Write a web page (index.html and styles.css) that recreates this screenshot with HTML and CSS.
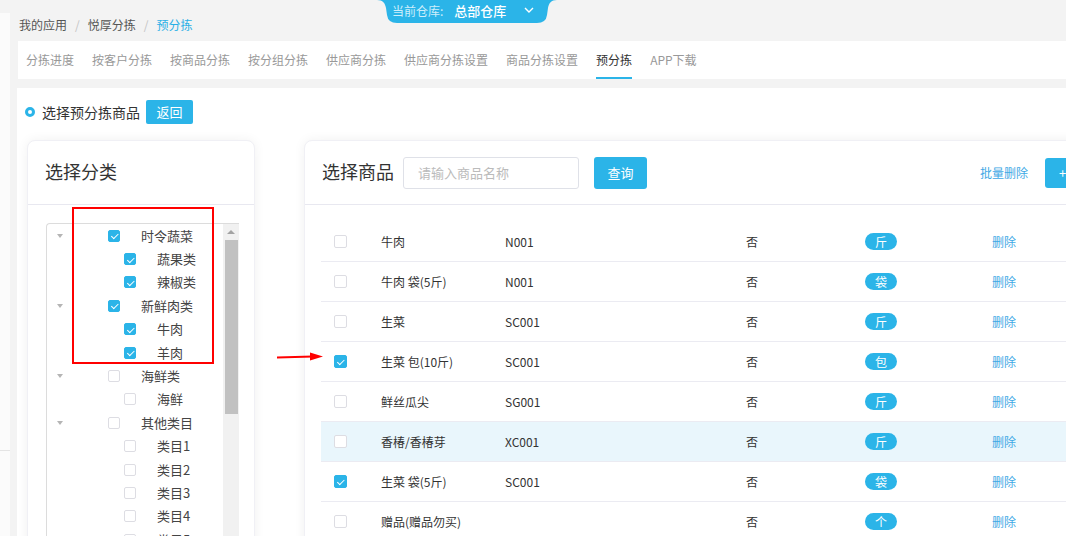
FILE: index.html
```html
<!DOCTYPE html>
<html lang="zh-CN">
<head>
<meta charset="utf-8">
<title>预分拣</title>
<link rel="stylesheet" href="styles.css">
</head>
<body>
<div class="page">
  <div class="side"><div class="side-line"></div></div>
  <div class="main">
    <nav class="crumbs"><span>我的应用</span><span class="sep">/</span><span>悦厚分拣</span><span class="sep">/</span><span class="cur">预分拣</span></nav>
    <div class="tabs">
      <span class="tab">分拣进度</span>
      <span class="tab">按客户分拣</span>
      <span class="tab">按商品分拣</span>
      <span class="tab">按分组分拣</span>
      <span class="tab">供应商分拣</span>
      <span class="tab">供应商分拣设置</span>
      <span class="tab">商品分拣设置</span>
      <span class="tab active">预分拣</span>
      <span class="tab">APP下载</span>
    </div>
    <section class="content">
      <div class="title-row">
        <span class="ring"></span>
        <span class="title-text">选择预分拣商品</span>
        <button class="btn btn-back">返回</button>
      </div>
      <div class="cards">
        <div class="card cat-card">
          <div class="card-head"><h2 class="card-title">选择分类</h2></div>
          <div class="tree-box">
            <ul class="tree">
              <li class="node"><span class="caret"></span><span class="cb on"></span><span class="label">时令蔬菜</span></li>
              <li class="node leaf"><span class="caret"></span><span class="cb on"></span><span class="label">蔬果类</span></li>
              <li class="node leaf"><span class="caret"></span><span class="cb on"></span><span class="label">辣椒类</span></li>
              <li class="node"><span class="caret"></span><span class="cb on"></span><span class="label">新鲜肉类</span></li>
              <li class="node leaf"><span class="caret"></span><span class="cb on"></span><span class="label">牛肉</span></li>
              <li class="node leaf"><span class="caret"></span><span class="cb on"></span><span class="label">羊肉</span></li>
              <li class="node"><span class="caret"></span><span class="cb"></span><span class="label">海鲜类</span></li>
              <li class="node leaf"><span class="caret"></span><span class="cb"></span><span class="label">海鲜</span></li>
              <li class="node"><span class="caret"></span><span class="cb"></span><span class="label">其他类目</span></li>
              <li class="node leaf"><span class="caret"></span><span class="cb"></span><span class="label">类目1</span></li>
              <li class="node leaf"><span class="caret"></span><span class="cb"></span><span class="label">类目2</span></li>
              <li class="node leaf"><span class="caret"></span><span class="cb"></span><span class="label">类目3</span></li>
              <li class="node leaf"><span class="caret"></span><span class="cb"></span><span class="label">类目4</span></li>
              <li class="node leaf"><span class="caret"></span><span class="cb"></span><span class="label">类目5</span></li>
            </ul>
            <div class="vscroll"><span class="up"></span><span class="thumb"></span></div>
          </div>
        </div>
        <div class="card goods-card">
          <div class="card-head goods-head">
            <h2 class="card-title">选择商品</h2>
            <input class="search" type="text" placeholder="请输入商品名称">
            <button class="btn btn-query">查询</button>
            <span class="bulk">批量删除</span>
            <button class="btn btn-add">+ 添加商品</button>
          </div>
          <div class="table">
            <div class="row"><span class="cb big"></span><span>牛肉</span><span>N001</span><span>否</span><span class="badge">斤</span><span class="del">删除</span></div>
            <div class="row"><span class="cb big"></span><span>牛肉 袋(5斤)</span><span>N001</span><span>否</span><span class="badge">袋</span><span class="del">删除</span></div>
            <div class="row"><span class="cb big"></span><span>生菜</span><span>SC001</span><span>否</span><span class="badge">斤</span><span class="del">删除</span></div>
            <div class="row"><span class="cb big on"></span><span>生菜 包(10斤)</span><span>SC001</span><span>否</span><span class="badge">包</span><span class="del">删除</span></div>
            <div class="row"><span class="cb big"></span><span>鲜丝瓜尖</span><span>SG001</span><span>否</span><span class="badge">斤</span><span class="del">删除</span></div>
            <div class="row hover"><span class="cb big"></span><span>香椿/香椿芽</span><span>XC001</span><span>否</span><span class="badge">斤</span><span class="del">删除</span></div>
            <div class="row"><span class="cb big on"></span><span>生菜 袋(5斤)</span><span>SC001</span><span>否</span><span class="badge">袋</span><span class="del">删除</span></div>
            <div class="row"><span class="cb big"></span><span>赠品(赠品勿买)</span><span></span><span>否</span><span class="badge">个</span><span class="del">删除</span></div>
          </div>
        </div>
      </div>
    </section>
  </div>

  <div class="wh-tab">
    <svg class="wh-shape" width="180" height="24" viewBox="0 0 180 24"><path d="M0 0 C6 0 8 3 9 8 L10 15 Q11 23 20 23 H160 Q169 23 170 15 L171 8 C172 3 174 0 180 0 Z" fill="#2bb4e8"/></svg>
    <div class="wh-text"><span class="wh-label">当前仓库:</span><span class="wh-name">总部仓库</span>
      <svg class="wh-chev" width="10" height="6" viewBox="0 0 10 6"><path d="M1 1 L5 5 L9 1" fill="none" stroke="#fff" stroke-width="1.4"/></svg>
    </div>
  </div>

  <div class="anno-box"></div>
  <svg class="anno-arrow" width="48" height="10" viewBox="0 0 48 10"><path d="M0 5.5 L36 4.6" stroke="#f00" stroke-width="2"/><path d="M33 0.5 L46 4.5 L33 8.5 Z" fill="#f00"/></svg>
</div>
</body>
</html>
```
FILE: styles.css
```css
* { box-sizing: border-box; }
html, body { margin: 0; padding: 0; }
body {
  width: 1066px;
  height: 536px;
  overflow: hidden;
  background: #f3f3f3;
  font-family: "Noto Sans CJK SC", "Noto Sans", sans-serif;
  color: #333;
  font-size: 12px;
}
ul { list-style: none; margin: 0; padding: 0; }
h2 { margin: 0; font-weight: normal; }
button { font-family: inherit; border: 0; padding: 0; cursor: pointer; }

.page { position: relative; display: flex; height: 536px; }

.side {
  width: 10px;
  margin-top: 13px;
  background: #fbfbfb;
  position: relative;
}
.side-line { position: absolute; left: 0; right: 0; top: 437px; border-top: 1px solid #e4e4e4; }

.main {
  margin-left: 7px;
  flex: 1;
  display: flex;
  flex-direction: column;
  min-width: 0;
}

.crumbs {
  height: 41px;
  padding: 17px 0 0 2px;
  line-height: 16px;
  font-size: 12px;
  color: #555;
}
.crumbs .sep { color: #c4c4c4; margin: 0 8px; }
.crumbs .cur { color: #2bb0e6; }

.tabs {
  margin-left: 1px;
  height: 38px;
  background: #fff;
  display: flex;
  gap: 18px;
  padding-left: 8px;
}
.tab {
  position: relative;
  line-height: 38px;
  font-size: 12px;
  color: #999;
  white-space: nowrap;
}
.tab.active { color: #333; }
.tab.active::after {
  content: "";
  position: absolute;
  left: 0; right: 0; bottom: 0;
  height: 2px;
  background: #2bb4e8;
}

.content {
  margin-top: 9px;
  flex: 1;
  background: #fff;
  padding: 12px 0 0 8px;
  overflow: hidden;
}
.title-row { display: flex; align-items: center; height: 24px; }
.ring {
  width: 10px; height: 10px;
  border-radius: 50%;
  border: 3px solid #2bb4e8;
  background: #fff;
}
.title-text { margin-left: 7px; font-size: 14px; color: #333; line-height: 20px; }
.btn { background: #2bb4e8; color: #fff; border-radius: 2px; }
.btn-back { margin-left: 6px; width: 47px; height: 24px; font-size: 13px; line-height: 24px; }

.cards { display: flex; gap: 49px; margin: 16px 0 0 2px; }
.card {
  background: #fff;
  border: 1px solid #f0f0f5;
  border-radius: 8px;
  box-shadow: 0 0 12px rgba(0, 0, 0, 0.06);
  height: 460px;
  flex-shrink: 0;
}
.card-head {
  height: 64px;
  border-bottom: 1px solid #e8e8f0;
  display: flex;
  align-items: center;
  padding-left: 17px;
}
.card-title { font-size: 18px; line-height: 24px; color: #333; margin-top: -3px; }

.cat-card { width: 228px; }
.tree-box {
  margin: 18px 0 0 18px;
  width: 193px;
  height: 330px;
  display: flex;
  border-top: 1px solid #dcdcdc;
  border-left: 1px solid #dcdcdc;
  border-radius: 4px 0 0 0;
}
.tree { flex: 1; padding-top: 0; }
.node {
  display: flex;
  align-items: center;
  height: 23.4px;
  padding-left: 10px;
  font-size: 13px;
  color: #444;
}
.caret {
  width: 0; height: 0;
  border-left: 3.5px solid transparent;
  border-right: 3.5px solid transparent;
  border-top: 4px solid #b5b5b5;
  margin-right: 45px;
}
.leaf .caret { visibility: hidden; margin-right: 61px; }
.cb {
  position: relative;
  width: 12px; height: 12px;
  border: 1px solid #dddde3;
  border-radius: 2px;
  background: #fff;
  flex-shrink: 0;
}
.cb.on { background: #2bb4e8; border-color: #2bb4e8; }
.cb.on::after {
  content: "";
  position: absolute;
  left: 3.5px; top: 1.5px;
  width: 3px; height: 5.5px;
  border: solid #fff;
  border-width: 0 1.3px 1.3px 0;
  transform: rotate(45deg);
}
.label { margin-left: 21px; line-height: 18px; }

.vscroll {
  width: 16px;
  background: #f1f1f1;
  position: relative;
  flex-shrink: 0;
}
.vscroll .up {
  position: absolute;
  left: 4px; top: 6px;
  width: 0; height: 0;
  border-left: 4px solid transparent;
  border-right: 4px solid transparent;
  border-bottom: 4px solid #a3a3a3;
}
.vscroll .thumb {
  position: absolute;
  left: 1.5px; right: 1.5px;
  top: 16px; height: 174px;
  background: #c1c1c1;
}

.goods-card { width: 840px; }
.search {
  margin-left: 9px;
  width: 176px;
  height: 32px;
  border: 1px solid #dfe1e8;
  border-radius: 3px;
  padding: 0 14px;
  font-family: inherit;
  font-size: 13px;
  color: #333;
  outline: none;
}
.search::placeholder { color: #bbb; }
.btn-query { margin-left: 15px; width: 53px; height: 32px; font-size: 13px; border-radius: 3px; }
.bulk { margin-left: auto; color: #3ea8e5; font-size: 12px; line-height: 16px; }
.btn-add { margin: 0 18px 0 17px; width: 80px; height: 30px; font-size: 13px; border-radius: 3px; text-align: left; padding-left: 14px; white-space: nowrap; overflow: hidden; }

.table { padding: 17px 0 0 16px; }
.row {
  display: grid;
  grid-template-columns: 47px 124px 241px 119px 127px auto;
  align-items: center;
  height: 40px;
  padding-left: 13px;
  border-bottom: 1px solid #ebebf2;
  font-size: 12px;
  color: #333;
  line-height: 16px;
}
.row.hover { background: #e9f6fc; }
.cb.big { width: 13px; height: 13px; }
.cb.big.on::after { left: 4px; top: 2px; }
.badge {
  width: 32px; height: 17px;
  border-radius: 9px;
  background: #2bb4e8;
  color: #fff;
  text-align: center;
  line-height: 17px;
  font-size: 12px;
}
.del { color: #3ea8e5; }

/* warehouse selector hanging from the top */
.wh-tab {
  position: absolute;
  left: 377px; top: 0;
  width: 180px; height: 24px;
}
.wh-shape { position: absolute; left: 0; top: 0; }
.wh-text {
  position: relative;
  display: flex;
  align-items: center;
  height: 20px;
  padding-left: 15px;
  color: #fff;
}
.wh-label { font-size: 12px; color: #cdeefb; }
.wh-name { margin-left: 11px; font-size: 13px; font-weight: 500; }
.wh-chev { margin-left: 18px; }

/* annotations */
.anno-box {
  position: absolute;
  left: 72px; top: 207px;
  width: 142px; height: 157px;
  border: 2px solid #f00;
}
.anno-arrow { position: absolute; left: 277px; top: 352px; }
```
